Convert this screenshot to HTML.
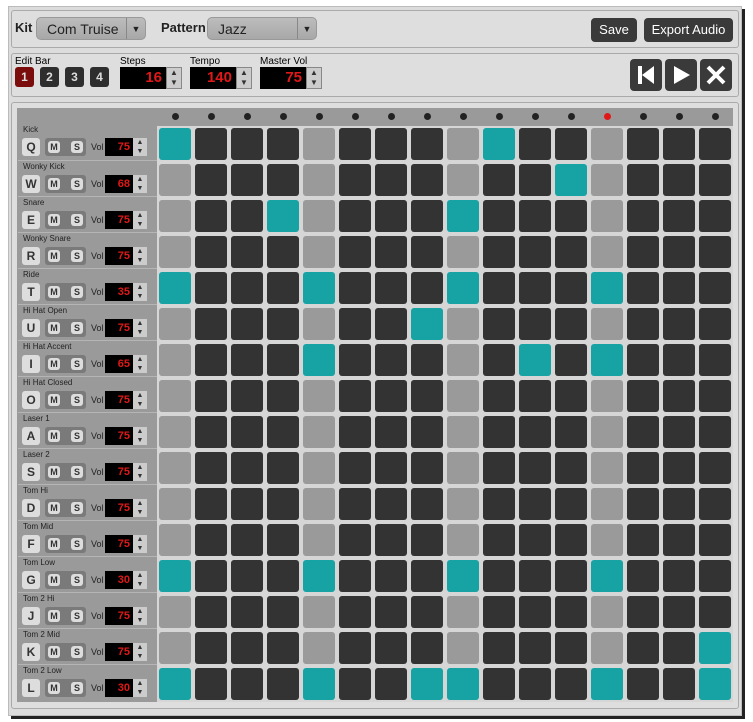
<!DOCTYPE html>
<html><head><meta charset="utf-8"><style>
*{box-sizing:border-box;margin:0;padding:0}
body{width:753px;height:722px;background:#fff;font-family:"Liberation Sans",Arial,sans-serif;position:relative;overflow:hidden}
.wrap{position:absolute;left:8px;top:6px;width:734px;height:710px;background:#dcdcdc;border:1px solid #bbb;box-shadow:3px 3px 0 #222}
.panel{position:absolute;background:#dedede;border:1px solid #aaa;border-radius:3px}
.a{position:absolute}
.sel{position:absolute;height:23px;background:linear-gradient(#bdbdbd,#a8a8a8);border:1px solid #999;border-radius:5px;font-size:14px;color:#222;padding:3px 0 0 10px}
.sel .arr{position:absolute;right:0;top:0;width:19px;height:21px;border-left:1px solid #888;text-align:center;font-size:9px;padding-top:6px}
.btn{position:absolute;background:#3a3a3a;color:#fff;border-radius:4px;font-size:13px;text-align:center}
.bar{position:absolute;top:67px;width:19px;height:20px;border-radius:3px;background:#2e2e2e;color:#ddd;font-weight:bold;font-size:12px;text-align:center;line-height:20px}
.num{position:absolute;height:22px;background:#000;color:#e01818;font-weight:bold;font-size:15px;text-align:right;padding-right:4px;line-height:22px}
.spin{position:absolute;width:16px;height:22px;background:#ccc;border:1px solid #888;font-size:8px;text-align:center;line-height:10px;color:#333}
.lab{font-size:14px;color:#222}
.cell{position:absolute;width:32px;height:32px;border-radius:3px;background:#333}
.cell.g{background:#9a9a9a}.cell.t{background:#17a3a3}
.dot{position:absolute;width:7px;height:7px;border-radius:50%;background:#222}
.rl{position:absolute;left:18px;width:139px;height:36px;border-top:1px solid #b5b5b5}
.rl .n{position:absolute;left:5px;top:1px;font-size:8px;color:#222}
.rl .k{position:absolute;left:4px;top:14px;width:18px;height:18px;background:#ddd;border-radius:3px;font-weight:bold;font-size:12px;text-align:center;line-height:18px;color:#333}
.rl .ms{position:absolute;left:27px;top:14px;width:41px;height:18px;background:#7a7a7a;border-radius:3px}
.rl .ms span{position:absolute;top:3px;width:12px;height:12px;background:#ddd;border-radius:3px;font-size:9px;font-weight:bold;text-align:center;line-height:12px;color:#333}
.rl .v{position:absolute;left:73px;top:18px;font-size:9px;color:#222}
.rl .nb{position:absolute;left:87px;top:14px;width:28px;height:18px;background:#000;color:#e01818;font-weight:bold;font-size:11px;text-align:right;padding-right:3px;line-height:18px}
.rl .sp{position:absolute;left:115px;top:14px;width:14px;height:18px;background:#ccc;font-size:7px;line-height:9px;text-align:center;color:#333}
</style></head><body>
<div class="wrap"></div>
<div class="panel" style="left:11px;top:10px;width:728px;height:38px"></div>
<div class="a lab" style="left:15px;top:20px;font-weight:bold;font-size:13px">Kit</div>
<div class="sel" style="left:36px;top:17px;width:110px">Com Truise<div class="arr">▼</div></div>
<div class="a lab" style="left:161px;top:20px;font-weight:bold;font-size:13px">Pattern</div>
<div class="sel" style="left:207px;top:17px;width:110px">Jazz<div class="arr">▼</div></div>
<div class="btn" style="left:591px;top:18px;width:46px;height:24px;line-height:24px">Save</div>
<div class="btn" style="left:644px;top:18px;width:89px;height:24px;line-height:24px">Export Audio</div>

<div class="panel" style="left:11px;top:53px;width:728px;height:44px"></div>
<div class="a" style="left:15px;top:56px;font-size:10px">Edit Bar</div>
<div class="bar" style="left:15px;background:#7a0c0c">1</div>
<div class="bar" style="left:40px">2</div>
<div class="bar" style="left:65px">3</div>
<div class="bar" style="left:90px">4</div>
<div class="a" style="left:120px;top:56px;font-size:10px">Steps</div>
<div class="num" style="left:120px;top:67px;width:46px">16</div><div class="spin" style="left:166px;top:67px">▲<br>▼</div>
<div class="a" style="left:190px;top:56px;font-size:10px">Tempo</div>
<div class="num" style="left:190px;top:67px;width:46px">140</div><div class="spin" style="left:236px;top:67px">▲<br>▼</div>
<div class="a" style="left:260px;top:56px;font-size:10px">Master Vol</div>
<div class="num" style="left:260px;top:67px;width:46px">75</div><div class="spin" style="left:306px;top:67px">▲<br>▼</div>
<div class="btn" style="left:630px;top:59px;width:32px;height:32px"><svg width="32" height="32"><rect x="8" y="7" width="4" height="18" fill="#fff"/><path d="M12 16L24 7V25Z" fill="#fff"/></svg></div>
<div class="btn" style="left:665px;top:59px;width:32px;height:32px"><svg width="32" height="32"><path d="M9 7L25 16L9 25Z" fill="#fff"/></svg></div>
<div class="btn" style="left:700px;top:59px;width:32px;height:32px"><svg width="32" height="32"><path d="M8 8L24 24M24 8L8 24" stroke="#fff" stroke-width="4"/></svg></div>

<div class="panel" style="left:11px;top:102px;width:728px;height:607px"></div>
<div class="a" style="left:17px;top:108px;width:716px;height:19px;background:#9a9a9a"></div>
<div class="a" style="left:17px;top:124px;width:140px;height:578px;background:#9a9a9a"></div>
<div class="a" style="left:157px;top:126px;width:576px;height:576px;background:#d6d6d6"></div>
<div id="g"></div>
<script>
var names=["Kick","Wonky Kick","Snare","Wonky Snare","Ride","Hi Hat Open","Hi Hat Accent","Hi Hat Closed","Laser 1","Laser 2","Tom Hi","Tom Mid","Tom Low","Tom 2 Hi","Tom 2 Mid","Tom 2 Low"];
var keys="QWERTUIOASDFGJKL";
var vols=[75,68,75,75,35,75,65,75,75,75,75,75,30,75,75,30];
var act=[[0,9],[11],[3,8],[],[0,4,8,12],[7],[4,10,12],[],[],[],[],[],[0,4,8,12],[],[15],[0,4,7,8,12,15]];
var h="";
for(var c=0;c<16;c++)h+='<div class="dot" style="left:'+(172+c*36)+'px;top:113px'+(c==12?';background:#e01818':'')+'"></div>';
for(var r=0;r<16;r++){
 var yy=124+r*36;
 h+='<div class="rl" style="top:'+yy+'px'+(r==0?';border-top:none':'')+'"><div class="n">'+names[r]+'</div><div class="k">'+keys[r]+'</div><div class="ms"><span style="left:3px">M</span><span style="left:26px">S</span></div><div class="v">Vol</div><div class="nb">'+vols[r]+'</div><div class="sp">▲<br>▼</div></div>';
 for(var c=0;c<16;c++){
  var cl="cell";
  if(act[r].indexOf(c)>=0)cl+=" t";else if(c%4==0)cl+=" g";
  h+='<div class="'+cl+'" style="left:'+(159+c*36)+'px;top:'+(128+r*36)+'px"></div>';
 }
}
document.getElementById("g").innerHTML=h;
</script>
</body></html>
